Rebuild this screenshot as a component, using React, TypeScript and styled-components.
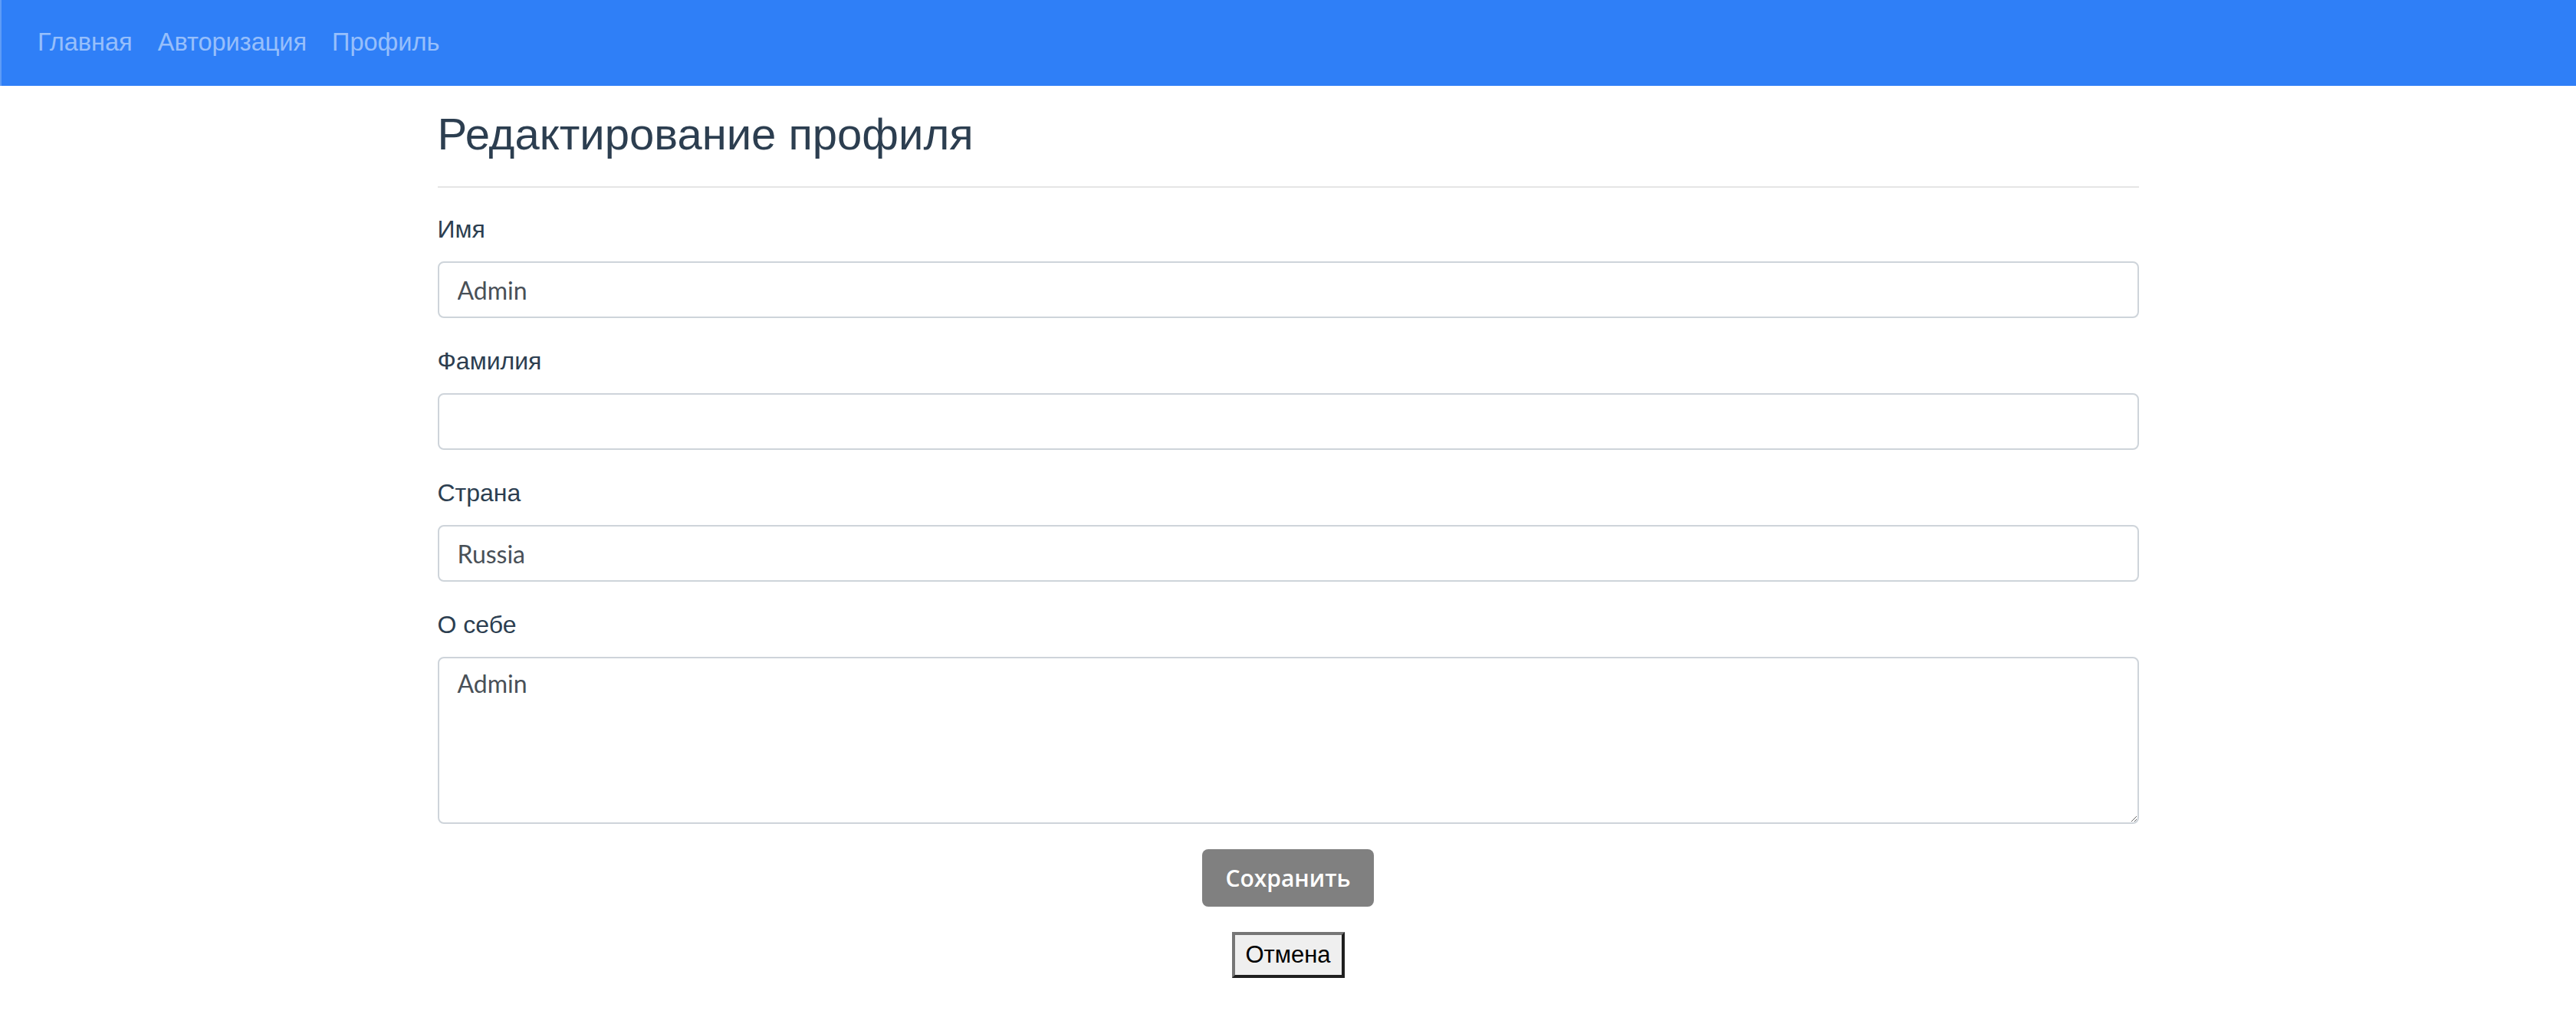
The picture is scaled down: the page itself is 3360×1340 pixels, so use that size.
import React from "react";
import styled, { createGlobalStyle } from "styled-components";

const GlobalStyle = createGlobalStyle`
  html, body {
    margin: 0;
    padding: 0;
    background: #ffffff;
  }
  body {
    font-family: "Liberation Sans", Arial, sans-serif;
  }
  * { box-sizing: border-box; }
`;

const NavBar = styled.nav`
  height: 112px;
  background: #2f7ff7;
  border-left: 2px solid #5e9bf6;
  display: flex;
  align-items: center;
  padding-left: 47px;
  gap: 33px;
`;

const NavLink = styled.a`
  font-family: "Liberation Sans", Arial, sans-serif;
  font-size: 32.5px;
  color: rgba(255, 255, 255, 0.5);
  text-decoration: none;
  line-height: 1;
  margin-top: -2px;
`;

const Main = styled.main`
  width: 2219px;
  margin: 0 auto;
  padding-top: 30px;
  display: flex;
  flex-direction: column;
`;

const Title = styled.h1`
  margin: 0;
  font-family: "Liberation Sans", Arial, sans-serif;
  font-weight: 400;
  font-size: 58px;
  line-height: 66px;
  color: #2c3e50;
`;

const Rule = styled.hr`
  margin: 35px 0 0;
  border: 0;
  height: 2px;
  background: #e5e5e5;
`;

const Form = styled.form`
  display: flex;
  flex-direction: column;
  padding-top: 32px;
  gap: 34px;
`;

const Field = styled.div`
  display: flex;
  flex-direction: column;
  gap: 19px;
`;

const Label = styled.label`
  font-family: "Liberation Sans", Arial, sans-serif;
  font-size: 32px;
  line-height: 45px;
  color: #2c3e50;
`;

const Input = styled.input`
  height: 74px;
  width: 100%;
  border: 2px solid #ced4da;
  border-radius: 8px;
  padding: 0 24px;
  font-family: Lato, "Open Sans", sans-serif;
  font-size: 32px;
  color: #495057;
  background: #fff;
  outline: none;
`;

const TextArea = styled.textarea`
  height: 218px;
  width: 100%;
  border: 2px solid #ced4da;
  border-radius: 8px;
  padding: 9px 24px;
  font-family: Lato, "Open Sans", sans-serif;
  font-size: 32px;
  line-height: 48px;
  color: #495057;
  background: #fff;
  outline: none;
  resize: vertical;
  display: block;
`;

const Actions = styled.div`
  display: flex;
  flex-direction: column;
  align-items: center;
  gap: 33px;
  margin-top: -1px;
`;

const SaveButton = styled.button`
  width: 224px;
  height: 75px;
  border: none;
  border-radius: 8px;
  background: #808080;
  color: #ffffff;
  font-family: "Open Sans", "Noto Sans", sans-serif;
  font-weight: 600;
  font-size: 30px;
  display: flex;
  align-items: center;
  justify-content: center;
  padding: 0;
`;

const CancelButton = styled.button`
  width: 147px;
  height: 60px;
  background: #efefef;
  border: 4px solid;
  border-color: #767676 #1f1f1f #1f1f1f #767676;
  font-family: "Liberation Sans", Arial, sans-serif;
  font-size: 31px;
  color: #000;
  padding: 0;
  display: flex;
  align-items: center;
  justify-content: center;
`;

export default function App() {
  return (
    <>
      <GlobalStyle />
      <NavBar>
        <NavLink href="#">Главная</NavLink>
        <NavLink href="#">Авторизация</NavLink>
        <NavLink href="#">Профиль</NavLink>
      </NavBar>
      <Main>
        <Title>Редактирование профиля</Title>
        <Rule />
        <Form onSubmit={(e) => e.preventDefault()}>
          <Field>
            <Label>Имя</Label>
            <Input defaultValue="Admin" />
          </Field>
          <Field>
            <Label>Фамилия</Label>
            <Input defaultValue="" />
          </Field>
          <Field>
            <Label>Страна</Label>
            <Input defaultValue="Russia" />
          </Field>
          <Field>
            <Label>О себе</Label>
            <TextArea defaultValue="Admin" />
          </Field>
          <Actions>
            <SaveButton type="submit">Сохранить</SaveButton>
            <CancelButton type="button">Отмена</CancelButton>
          </Actions>
        </Form>
      </Main>
    </>
  );
}
